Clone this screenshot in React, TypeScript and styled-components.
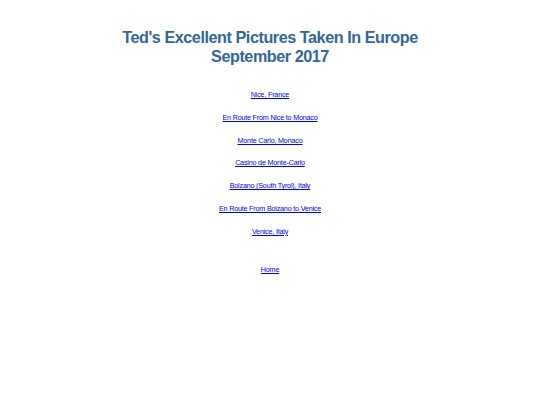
import React from 'react';
import styled, { createGlobalStyle } from 'styled-components';

const Global = createGlobalStyle`
  html, body {
    margin: 0;
    padding: 0;
    background: #ffffff;
  }
  body {
    font-family: "Liberation Sans", Arial, sans-serif;
  }
`;

const Page = styled.div`
  display: flex;
  flex-direction: column;
  align-items: center;
  padding-top: 28px;
`;

const Title = styled.h1`
  margin: 0;
  color: #336699;
  font-size: 16.2px;
  letter-spacing: -0.45px;
  line-height: 19px;
  font-weight: bold;
  text-align: center;
`;

const LinkList = styled.ul`
  list-style: none;
  margin: 24px 0 0;
  padding: 0;
  display: flex;
  flex-direction: column;
  align-items: center;
  gap: 13.8px;
`;

const Item = styled.li`
  font-size: 7.2px;
  letter-spacing: -0.2px;
  line-height: 9px;
`;

const Link = styled.a`
  color: #0000ee;
  text-decoration: underline;
`;

const HomeRow = styled(Item).attrs({ as: 'div' })`
  margin-top: 29px;
`;

const places = [
  'Nice, France',
  'En Route From Nice to Monaco',
  'Monte Carlo, Monaco',
  'Casino de Monte-Carlo',
  'Bolzano (South Tyrol), Italy',
  'En Route From Bolzano to Venice',
  'Venice, Italy',
];

export default function App() {
  return (
    <>
      <Global />
      <Page>
        <Title>
          Ted's Excellent Pictures Taken In Europe
          <br />
          September 2017
        </Title>
        <LinkList>
          {places.map((p) => (
            <Item key={p}>
              <Link href="#">{p}</Link>
            </Item>
          ))}
        </LinkList>
        <HomeRow>
          <Link href="#">Home</Link>
        </HomeRow>
      </Page>
    </>
  );
}
